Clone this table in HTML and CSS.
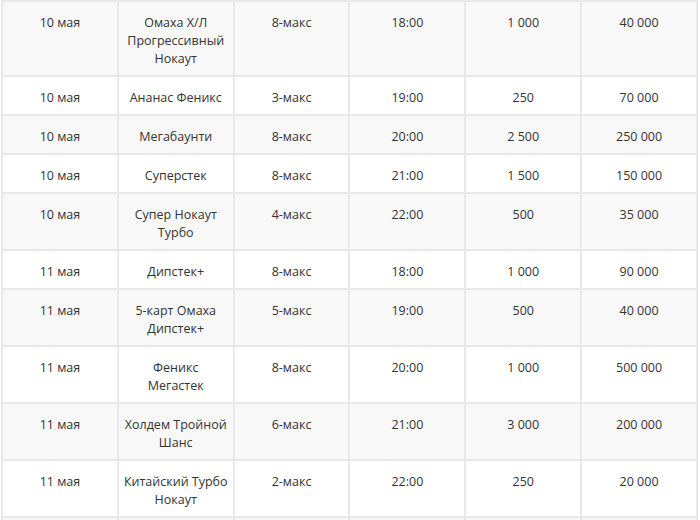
FILE: index.html
```html
<!DOCTYPE html>
<html lang="ru">
<head>
<meta charset="utf-8">
<link rel="stylesheet" href="styles.css">
</head>
<body>
<table class="schedule">
  <tbody>
    <tr class="alt"><td>10 мая</td><td>Омаха Х/Л Прогрессивный Нокаут</td><td>8-макс</td><td>18:00</td><td>1 000</td><td>40 000</td></tr>
    <tr><td>10 мая</td><td>Ананас Феникс</td><td>3-макс</td><td>19:00</td><td>250</td><td>70 000</td></tr>
    <tr class="alt"><td>10 мая</td><td>Мегабаунти</td><td>8-макс</td><td>20:00</td><td>2 500</td><td>250 000</td></tr>
    <tr><td>10 мая</td><td>Суперстек</td><td>8-макс</td><td>21:00</td><td>1 500</td><td>150 000</td></tr>
    <tr class="alt"><td>10 мая</td><td>Супер Нокаут Турбо</td><td>4-макс</td><td>22:00</td><td>500</td><td>35 000</td></tr>
    <tr><td>11 мая</td><td>Дипстек+</td><td>8-макс</td><td>18:00</td><td>1 000</td><td>90 000</td></tr>
    <tr class="alt"><td>11 мая</td><td>5-карт Омаха Дипстек+</td><td>5-макс</td><td>19:00</td><td>500</td><td>40 000</td></tr>
    <tr><td>11 мая</td><td>Феникс Мегастек</td><td>8-макс</td><td>20:00</td><td>1 000</td><td>500 000</td></tr>
    <tr class="alt"><td>11 мая</td><td>Холдем Тройной Шанс</td><td>6-макс</td><td>21:00</td><td>3 000</td><td>200 000</td></tr>
    <tr><td>11 мая</td><td>Китайский Турбо Нокаут</td><td>2-макс</td><td>22:00</td><td>250</td><td>20 000</td></tr>
    <tr class="alt"><td>12 мая</td><td>Мегабаунти</td><td>8-макс</td><td>18:00</td><td>1 000</td><td>100 000</td></tr>
  </tbody>
</table>
</body>
</html>
```
FILE: styles.css
```css
html, body {
  margin: 0;
  padding: 0;
  background: #ffffff;
}
body {
  padding: 0 0 0 1px;
  font-family: "Open Sans", "Noto Sans", sans-serif;
  font-size: 12.5px;
  line-height: 18px;
  color: #333333;
}
.schedule {
  width: 697px;
  table-layout: fixed;
  border-collapse: separate;
  border-spacing: 0;
  border: 1px solid #e8e8e8;
}
.schedule td {
  border: 1px solid #e8e8e8;
  padding: 12px 5px 7px;
  text-align: center;
  vertical-align: top;
}
.schedule tr.alt td {
  background: #f8f8f8;
}
```
